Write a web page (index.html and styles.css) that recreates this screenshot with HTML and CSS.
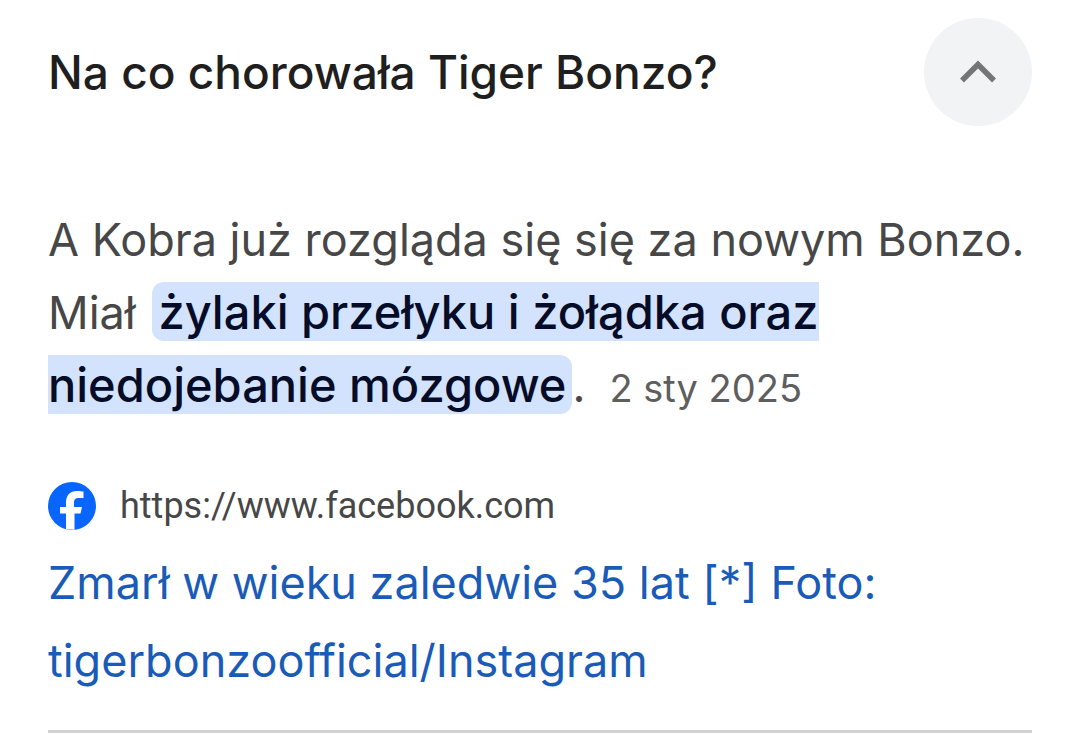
FILE: index.html
```html
<!DOCTYPE html>
<html lang="pl">
<head>
<meta charset="utf-8">
<meta name="viewport" content="width=device-width, initial-scale=1">
<title>Na co chorowała Tiger Bonzo?</title>
<link rel="stylesheet" href="styles.css">
</head>
<body>
<main class="card">
  <header class="question">
    <h1 class="question-title">Na co chorowała Tiger Bonzo?</h1>
    <button class="toggle" type="button" aria-expanded="true" aria-label="Zwiń odpowiedź">
      <svg class="toggle-icon" viewBox="0 0 36 24" aria-hidden="true"><path d="M2 20.500 18 4.500 34 20.500" fill="none" stroke="#757577" stroke-width="5.500"/></svg>
    </button>
  </header>
  <p class="answer">A Kobra już rozgląda się się za nowym Bonzo.<br>Miał <mark class="highlight">żylaki przełyku i żołądka oraz<br>niedojebanie mózgowe</mark>.<time class="date" datetime="2025-01-02">2 sty 2025</time></p>
  <section class="source">
    <div class="site">
      <svg class="site-icon" viewBox="0 0 48 48" aria-hidden="true"><circle cx="24" cy="24" r="24" fill="#0866ff"/><path d="M18 47.300V31.500h-6V25h6v-4c0-8 4-12 11-12 3 0 5 .3 6.500.6V16h-4.500c-4 0-5 1.700-5 5v4h8l-1.500 6.500H26.500v16.200z" fill="#fff"/></svg>
      <span class="site-url">https://www.facebook.com</span>
    </div>
    <a class="result-link" href="https://www.facebook.com">Zmarł w wieku zaledwie 35 lat [*] Foto: tigerbonzoofficial/Instagram</a>
  </section>
</main>
</body>
</html>
```
FILE: styles.css
```css
* { box-sizing: border-box; }
body { margin: 0; background: #fff; color: #1f1f1f; font-family: Inter, "Open Sans", sans-serif; }
.card { margin: 0 48px; padding-top: 18px; border-bottom: 3px solid #d2d2d2; }
.question { display: flex; align-items: center; justify-content: space-between; gap: 24px; }
.question-title { margin: 0; font-size: 46px; font-weight: 500; line-height: 60px; }
.toggle { display: flex; align-items: center; justify-content: center; flex: none; width: 108px; height: 108px; padding: 0; border: 0; border-radius: 50%; background: #f1f3f4; }
.toggle-icon { width: 36px; height: 24px; }
.answer { margin: 78px 0 0; font-size: 45px; line-height: 72px; color: #474747; }
.highlight { margin-left: 4px; padding: 1px 6px; border-radius: 12px; background: #d3e3fd; color: #040c28; font-size: 47px; font-weight: 500; }
.date { margin-left: 24px; font-size: 38px; color: #5e5e5e; }
.source { margin-top: 58px; padding-bottom: 30px; }
.site { display: flex; align-items: center; gap: 24px; }
.site-icon { width: 48px; height: 48px; }
.site-url { font-family: Roboto, sans-serif; font-size: 36px; line-height: 48px; color: #474747; }
.result-link { display: block; margin-top: 14px; font-size: 45px; line-height: 78px; color: #1a5bb8; text-decoration: none; }
```
